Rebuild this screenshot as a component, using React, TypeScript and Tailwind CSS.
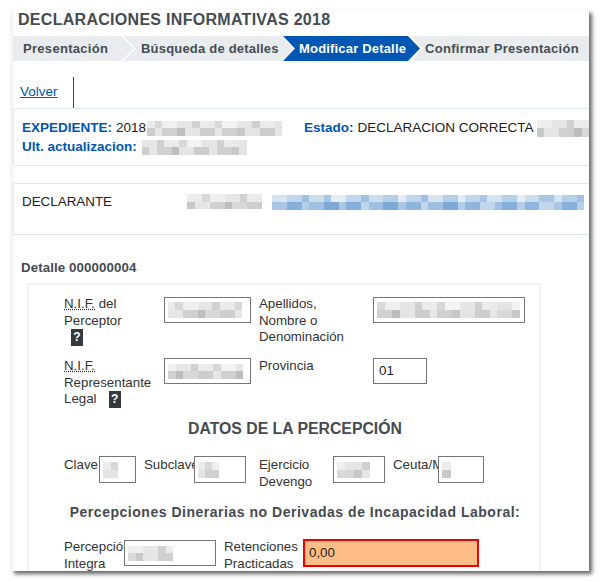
import React from "react";

// sorted light to dark, top row of a mosaic leans to the light end
const grays = ["#f3f3f3", "#efefef", "#ebebeb", "#e6e6e6", "#e2e4e6", "#d8d8d8", "#d2d0ce", "#cdcdcd", "#c6c8ca", "#bdbdbd"];
const blues = ["#e4edf6", "#d6e4f2", "#cbdded", "#c0d6ec", "#b4cfe8", "#a9c7e5", "#9fc0e2", "#8fb6dd", "#87afdb", "#7ea8d6"];

// pixelated stand-in for the redacted values in the reference
function Mosaic({ w, h, cell = 7.5, palette = grays, seed = 3 }: { w: number; h: number; cell?: number; palette?: string[]; seed?: number }) {
  const cols = Math.max(1, Math.round(w / cell));
  const rows = Math.max(1, Math.round(h / cell));
  const cells = Array.from({ length: cols * rows }, (_, i) => {
    const n = (((i + seed) * 2654435761) >>> 0) >>> 9;
    const lower = Math.floor(i / cols) >= 1;
    return lower ? palette[3 + (n % (palette.length - 3))] : palette[n % 7];
  });
  return (
    <span
      className="inline-grid shrink-0 align-middle blur-[0.6px]"
      style={{ width: w, height: h, gridTemplateColumns: `repeat(${cols}, 1fr)`, gridTemplateRows: `repeat(${rows}, 1fr)` }}
    >
      {cells.map((c, i) => (
        <span key={i} style={{ backgroundColor: c }} />
      ))}
    </span>
  );
}

function Abbr({ children }: { children: React.ReactNode }) {
  return <span className="underline decoration-dotted decoration-[#333] underline-offset-1">{children}</span>;
}

function Help() {
  return (
    <span className="-my-[2px] inline-flex h-[17px] w-3 items-center justify-center bg-[#343a40] text-[12px] font-bold leading-none text-white">?</span>
  );
}

function Field({ className, children }: { className: string; children?: React.ReactNode }) {
  return (
    <div className={`relative z-10 flex shrink-0 items-center border border-[#767676] bg-white pl-[3px] text-[13.3px] text-[#222] ${className}`}>
      {children}
    </div>
  );
}

export default function App() {
  return (
    <div className="h-[582px] w-[600px] overflow-hidden bg-white pb-[11px] pl-[11px] pr-[11px] pt-[10px] font-['Liberation_Sans',Arial,sans-serif]">
      <div className="h-[561px] overflow-hidden border-l-2 border-[#f4f4f4] bg-white pr-0 shadow-[3px_3px_4px_rgba(0,0,0,0.6)]">
        <h1 className="mb-[6px] pl-[5px] text-[16px] font-bold leading-[20px] tracking-[0.29px] text-[#444b52]">
          DECLARACIONES INFORMATIVAS 2018
        </h1>

        {/* stepper */}
        <div className="flex h-[25px] text-[13px] font-bold leading-[26px] tracking-[0.3px] text-[#454c53]">
          <div className="w-[121px] shrink-0 bg-[#e9ecef] pl-[10px] [clip-path:polygon(0_0,calc(100%-13px)_0,100%_50%,calc(100%-13px)_100%,0_100%)]">
            Presentación
          </div>
          <div className="-ml-[11px] w-[171px] shrink-0 bg-[#e9ecef] pl-[18px] tracking-[0.2px] [clip-path:polygon(0_0,calc(100%-13px)_0,100%_50%,calc(100%-13px)_100%,0_100%,13px_50%)]">
            Búsqueda de detalles
          </div>
          <div className="-ml-[11px] w-[137px] shrink-0 bg-[#0056b3] pl-[16px] tracking-[0.18px] text-white [clip-path:polygon(0_0,calc(100%-12px)_0,100%_50%,calc(100%-12px)_100%,0_100%,12px_50%)]">
            Modificar Detalle
          </div>
          <div className="-ml-[9px] flex-1 bg-[#e9ecef] pl-[14px] [clip-path:polygon(0_0,100%_0,100%_100%,0_100%,12px_50%)]">
            Confirmar Presentación
          </div>
        </div>

        {/* toolbar */}
        <div className="flex h-[47px] items-end">
          <div className="flex h-[31px] w-[61px] items-center border-r border-[#0056b3] pl-[7px] text-[13.5px] text-[#0056b3] underline">
            Volver
          </div>
        </div>

        <div className="h-[58px] border border-r-0 border-[#e3e9f1] pl-[8px] pt-[9px] text-[13.5px] leading-[20px] text-[#222]">
          <div className="flex h-[20px] items-center whitespace-nowrap">
            <b className="text-[#0056b3]">EXPEDIENTE:</b>
            <span className="ml-[4px]">2018</span>
            <span className="ml-[1px] mr-[22px]">
              <Mosaic w={135} h={15} />
            </span>
            <b className="text-[#0056b3]">Estado:</b>
            <span className="ml-[4px]">DECLARACION CORRECTA</span>
            <span className="ml-[3px]">
              <Mosaic w={53} h={17} seed={5} />
            </span>
          </div>
          <div className="flex h-[18px] items-center whitespace-nowrap">
            <b className="text-[#0056b3]">Ult. actualizacion:</b>
            <span className="ml-[5px]">
              <Mosaic w={105} h={15} seed={7} />
            </span>
          </div>
        </div>

        <div className="mt-[17px] flex h-[52px] items-start border border-r-0 border-[#dfe8f2] pl-[8px] pt-[10px] text-[13.4px] leading-[16px] text-[#222]">
          <span className="w-[165px] shrink-0">DECLARANTE</span>
          <Mosaic w={75} h={15} seed={2} />
          <span className="ml-[10px]">
            <Mosaic w={312} h={15} palette={blues} seed={5} />
          </span>
        </div>

        <h2 className="mt-[25px] pl-[8px] text-[13.3px] font-bold leading-[16px] tracking-[0.1px] text-[#444b52]">Detalle 000000004</h2>

        {/* detail form, cut off by the bottom of the capture */}
        <div className="ml-[14px] mt-[7px] h-[300px] w-[514px] border-2 border-[#eff2f8] bg-white pl-[35px] pt-[12px] text-[13.3px] leading-[16.5px] text-[#333]">
          <div className="flex h-[61px]">
            <div className="-mt-px w-[100px] shrink-0">
              <Abbr>N.I.F.</Abbr> del
              <br />
              Perceptor
              <br />
              <span className="ml-[7px]">
                <Help />
              </span>
            </div>
            <Field className="h-[26px] w-[87px]">
              <Mosaic w={74} h={16} />
            </Field>
            <div className="-mt-px ml-[8px] w-[114px] shrink-0">
              Apellidos,
              <br />
              Nombre o
              <br />
              Denominación
            </div>
            <Field className="h-[26px] w-[152px]">
              <Mosaic w={143} h={16} seed={4} />
            </Field>
          </div>

          <div className="flex h-[61px]">
            <div className="w-[100px] shrink-0">
              <Abbr>N.I.F.</Abbr>
              <br />
              Representante
              <br />
              Legal
              <span className="ml-[12px]">
                <Help />
              </span>
            </div>
            <Field className="h-[26px] w-[87px]">
              <Mosaic w={75} h={15} seed={6} />
            </Field>
            <div className="ml-[8px] w-[114px] shrink-0">Provincia</div>
            <Field className="h-[26px] w-[54px] pl-[5px]">01</Field>
          </div>

          <h3 className="-ml-[35px] w-[532px] text-center text-[15.8px] font-bold leading-[20px] text-[#444b52]">
            DATOS DE LA PERCEPCIÓN
          </h3>

          <div className="mt-[17px] flex h-[27px]">
            <div className="mt-px w-[35px] shrink-0 overflow-hidden whitespace-nowrap">Clave</div>
            <Field className="h-[27px] w-[37px]">
              <Mosaic w={15} h={16} />
            </Field>
            <div className="ml-[8px] mt-px w-[50px] shrink-0 overflow-hidden whitespace-nowrap">Subclave</div>
            <Field className="h-[27px] w-[52px]">
              <Mosaic w={21} h={16} />
            </Field>
            <div className="ml-[13px] mt-px w-[74px] shrink-0">
              Ejercicio
              <br />
              Devengo
            </div>
            <Field className="h-[27px] w-[52px]">
              <Mosaic w={33} h={16} seed={6} />
            </Field>
            <div className="ml-[8px] mt-px w-[45px] shrink-0 overflow-hidden whitespace-nowrap">Ceuta/Melilla</div>
            <Field className="h-[27px] w-[46px]">
              <Mosaic w={9} h={16} />
            </Field>
          </div>

          <h3 className="-ml-[35px] mt-[20px] w-[532px] text-center text-[14px] font-bold leading-[18px] tracking-[0.52px] text-[#444b52]">
            Percepciones Dinerarias no Derivadas de Incapacidad Laboral:
          </h3>

          <div className="mt-[18px] flex">
            <div className="w-[60px] shrink-0 overflow-hidden whitespace-nowrap">
              Percepción
              <br />
              Integra
            </div>
            <Field className="mt-px h-[26px] w-[92px]">
              <Mosaic w={45} h={15} seed={5} />
            </Field>
            <div className="ml-[8px] w-[79px] shrink-0">
              Retenciones
              <br />
              Practicadas
            </div>
            <div className="flex h-[28px] w-[176px] shrink-0 items-center border-2 border-[#f00000] bg-[#ffbe85] pl-[4px] text-[13.3px] text-[#222]">
              0,00
            </div>
          </div>
        </div>
      </div>
    </div>
  );
}
